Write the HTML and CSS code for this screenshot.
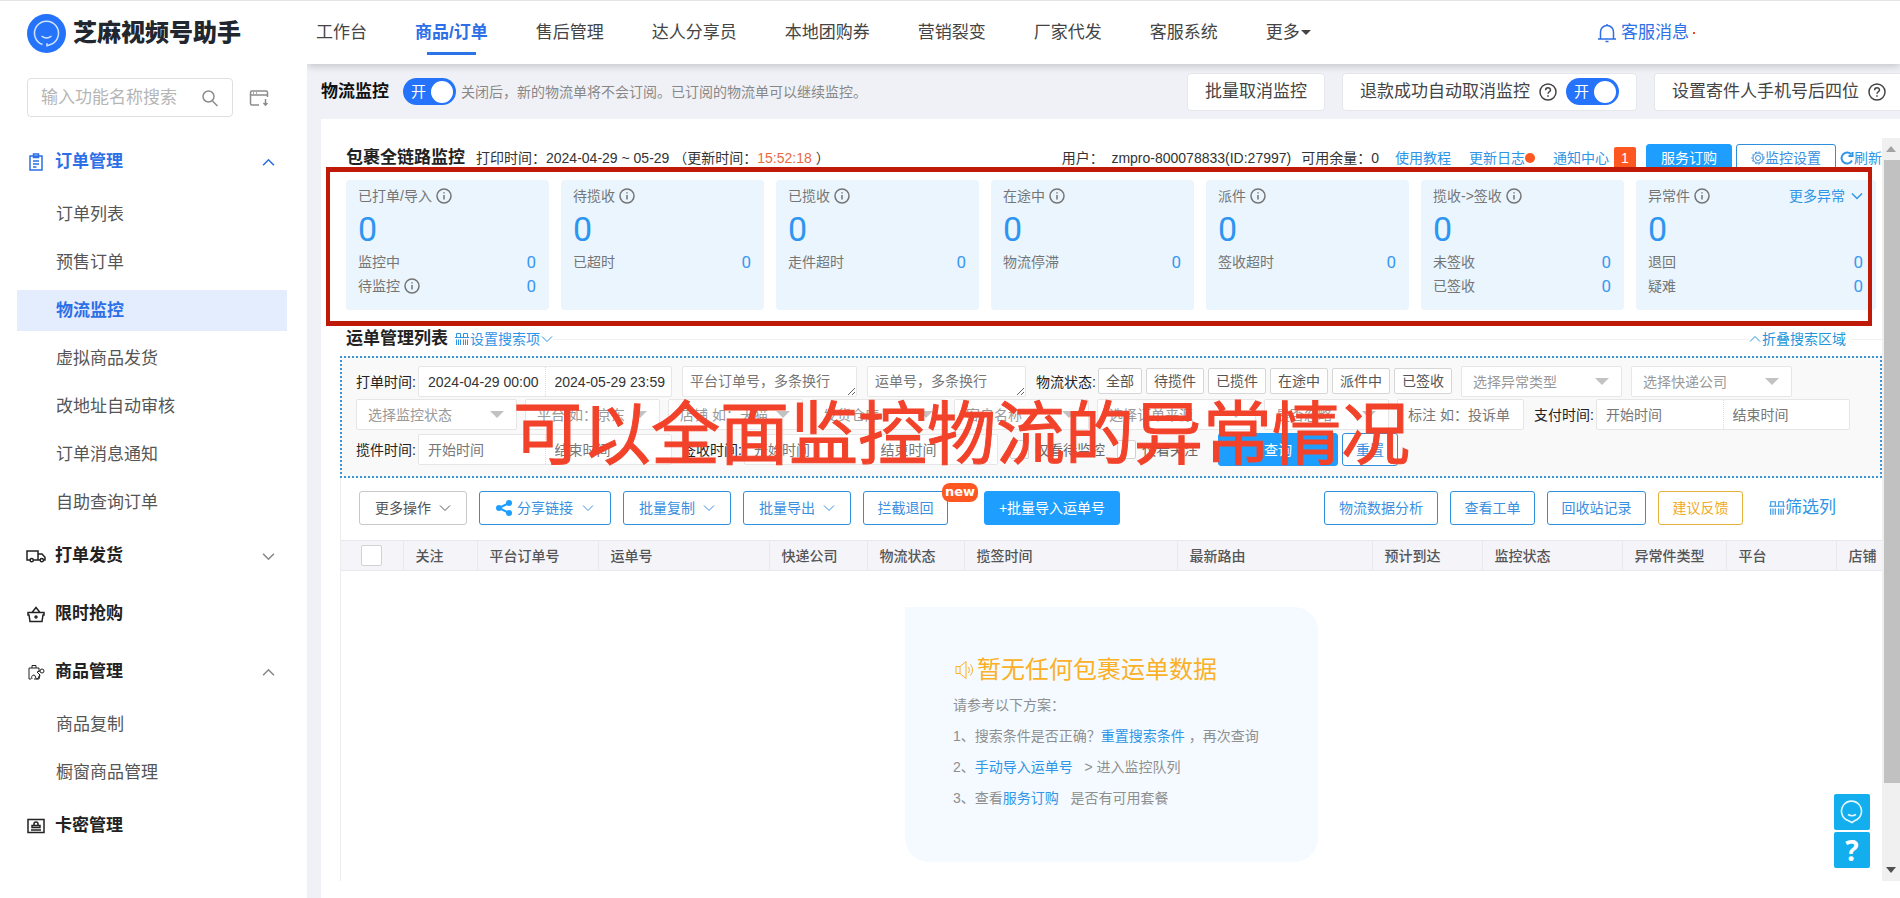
FILE: index.html
```html
<!DOCTYPE html>
<html lang="zh-CN">
<head>
<meta charset="utf-8">
<title>芝麻视频号助手</title>
<link rel="stylesheet" href="styles.css">
</head>
<body>
<svg class="defs" aria-hidden="true">
  <symbol id="info" viewBox="0 0 16 16"><circle cx="8" cy="8" r="7"/><path d="M8 7v4.500M8 4.200v1.400"/></symbol>
  <symbol id="help" viewBox="0 0 18 18"><circle cx="9" cy="9" r="8"/><path d="M6.600 7.200c0-3.200 4.900-3.100 4.900-.2 0 1.700-2.500 1.900-2.500 3.800M9 12.300v1.400"/></symbol>
  <symbol id="down" viewBox="0 0 12 12"><path d="M1 3.500l5 5 5-5"/></symbol>
  <symbol id="up" viewBox="0 0 12 12"><path d="M1 8.500l5-5 5 5"/></symbol>
  <symbol id="grid" viewBox="0 0 14 14"><path d="M1.500 6V1.500h4V6M8.500 6V1.500h4V6M0 5.500h14M1.500 7.500V13M3.500 7.500V13M5.500 7.500V13M8.500 7.500V13M10.500 7.500V13M12.500 7.500V13"/></symbol>
</svg>
<aside class="side">
  <div class="brand">
    <svg width="39" height="39" viewBox="0 0 39 39"><circle cx="19.500" cy="19.500" r="19.500" fill="#2673fb"/><path d="M15.500 30.500a12 12 0 1 1 8 0l-3.500 1.200v-2.500" fill="none" stroke="#cfe3ff" stroke-width="1.500"/><path d="M14.500 22q5 4 10 0" fill="none" stroke="#cfe3ff" stroke-width="1.500"/></svg>
    <h1>芝麻视频号助手</h1>
  </div>
  <div class="find">
    <label class="findbox"><input type="search" placeholder="输入功能名称搜索" aria-label="搜索功能">
      <svg class="ic gray" width="18" height="18" viewBox="0 0 18 18"><circle cx="7.500" cy="7.500" r="5.500"/><path d="M11.500 12l5 5"/></svg></label>
    <svg class="ic gray" width="20" height="18" viewBox="0 0 20 18"><path d="M10 16H3a1.500 1.500 0 0 1-1.500-1.500v-11A1.500 1.500 0 0 1 3 2h14a1.500 1.500 0 0 1 1.500 1.500V8M1.500 6h17M4 4h1M7 4h1M16.500 10v6M14.500 14l2 2.200 2-2.200"/></svg>
  </div>
  <nav class="menu">
    <button class="group on"><svg class="ic" width="18" height="18" viewBox="0 0 18 18"><path d="M3 3h12v14H3zM6.500 1h5v3.500h-5zM6 8h6M6 11h6M6 14h3.500"/></svg><span>订单管理</span><svg class="ic arrow"><use href="#up"/></svg></button>
    <a href="#">订单列表</a>
    <a href="#">预售订单</a>
    <a href="#" class="cur">物流监控</a>
    <a href="#">虚拟商品发货</a>
    <a href="#">改地址自动审核</a>
    <a href="#">订单消息通知</a>
    <a href="#">自助查询订单</a>
    <button class="group"><svg class="ic" width="20" height="18" viewBox="0 0 20 18"><path d="M4 13H1V4h11v9H7.500M12 7h4l3 3.200V13h-1.500M14 13h-2"/><circle cx="5.700" cy="13.200" r="1.600"/><circle cx="15.800" cy="13.200" r="1.600"/></svg><span>打单发货</span><svg class="ic arrow"><use href="#down"/></svg></button>
    <button class="group"><svg class="ic" width="18" height="18" viewBox="0 0 18 18"><path d="M1 7.500h16v2.500h-1l-1 6.500H3L2 10H1zM5 7.500L9 2.500l4 5"/><circle cx="9" cy="12" r="1"/></svg><span>限时抢购</span></button>
    <button class="group"><svg class="ic thin" width="18" height="18" viewBox="0 0 18 18"><path d="M4 16H2V5h10v3M5 5V2.500h4V5M5 16c-1-2 0-4 2-4s1 4 3 4 1.500-4 3-4M7 16h5l1-4-3-3 3-1"/><circle cx="15" cy="8" r="2"/></svg><span>商品管理</span><svg class="ic arrow"><use href="#up"/></svg></button>
    <a href="#">商品复制</a>
    <a href="#">橱窗商品管理</a>
    <button class="group"><svg class="ic" width="18" height="18" viewBox="0 0 18 18"><path d="M1 2.500h16v13H1zM4 13h10M5 10.500h8V8.500H5zM7 8.500V7a2 2 0 0 1 4 0v1.500"/></svg><span>卡密管理</span></button>
  </nav>
</aside>
<main class="main">
  <header class="top">
    <nav>
      <a href="#">工作台</a><a href="#" class="cur">商品/订单</a><a href="#">售后管理</a><a href="#">达人分享员</a><a href="#">本地团购券</a><a href="#">营销裂变</a><a href="#">厂家代发</a><a href="#">客服系统</a><a href="#" class="more">更多</a>
    </nav>
    <a href="#" class="bell"><svg class="ic" width="20" height="20" viewBox="0 0 20 20"><path d="M1 16h18M3.500 16V9a6.500 6.500 0 0 1 13 0v7M10 2.500V1M8.500 18.500h3"/></svg>客服消息<i></i></a>
  </header>
  <div class="bar">
    <h2>物流监控</h2>
    <label class="switch">开<input type="checkbox" checked></label>
    <span class="note">关闭后，新的物流单将不会订阅。已订阅的物流单可以继续监控。</span>
    <button class="pill first">批量取消监控</button>
    <div class="pill">退款成功自动取消监控<svg class="ic" width="18" height="18"><use href="#help"/></svg><label class="switch">开<input type="checkbox" checked></label></div>
    <button class="pill last">设置寄件人手机号后四位<svg class="ic" width="18" height="18"><use href="#help"/></svg></button>
  </div>
  <div class="panel">
    <div class="view">
      <div class="meta">
        <h2>包裹全链路监控</h2>
        <span class="period">打印时间：2024-04-29 ~ 05-29 （更新时间：<b>15:52:18</b> ）</span>
        <span class="user">用户：&nbsp; zmpro-800078833(ID:27997)</span>
        <span class="quota">可用余量：0</span>
        <a href="#">使用教程</a>
        <a href="#" class="log">更新日志<i class="dot"></i></a>
        <a href="#" class="notice">通知中心<i class="num">1</i></a>
        <button class="btn fill">服务订购</button>
        <button class="btn"><svg class="ic thin" width="14" height="14" viewBox="0 0 14 14"><circle cx="7" cy="7" r="2.500"/><circle cx="7" cy="7" r="6" stroke-dasharray="2 1.500"/><circle cx="7" cy="7" r="5"/></svg>监控设置</button>
        <a href="#" class="refresh"><svg class="ic" width="14" height="14" viewBox="0 0 14 14"><path d="M12 9.500A5.500 5.500 0 1 1 11 3.200M12.500 1v4h-4" stroke-width="2"/></svg>刷新</a>
      </div>
      <section class="stats">
        <article><h3>已打单/导入<svg class="ic"><use href="#info"/></svg></h3><strong>0</strong><p>监控中<em>0</em></p><p>待监控<svg class="ic"><use href="#info"/></svg><em>0</em></p></article>
        <article><h3>待揽收<svg class="ic"><use href="#info"/></svg></h3><strong>0</strong><p>已超时<em>0</em></p></article>
        <article><h3>已揽收<svg class="ic"><use href="#info"/></svg></h3><strong>0</strong><p>走件超时<em>0</em></p></article>
        <article><h3>在途中<svg class="ic"><use href="#info"/></svg></h3><strong>0</strong><p>物流停滞<em>0</em></p></article>
        <article><h3>派件<svg class="ic"><use href="#info"/></svg></h3><strong>0</strong><p>签收超时<em>0</em></p></article>
        <article><h3>揽收-&gt;签收<svg class="ic"><use href="#info"/></svg></h3><strong>0</strong><p>未签收<em>0</em></p><p>已签收<em>0</em></p></article>
        <article class="wide"><h3>异常件<svg class="ic"><use href="#info"/></svg><a href="#">更多异常<svg class="ic chev"><use href="#down"/></svg></a></h3><strong>0</strong><p>退回<em>0</em></p><p>疑难<em>0</em></p></article>
        <div class="frame"></div>
      </section>
      <div class="listhead">
        <h2>运单管理列表</h2>
        <a href="#"><svg class="ic thin" width="14" height="14"><use href="#grid"/></svg>设置搜索项<svg class="ic chev thin"><use href="#down"/></svg></a>
        <hr>
        <a href="#" class="fold"><svg class="ic chev thin"><use href="#up"/></svg>折叠搜索区域</a>
        <hr class="tail">
      </div>
      <form class="search">
        <div class="row">
          <span class="lab">打单时间:</span>
          <span class="range"><input aria-label="打单开始时间" value="2024-04-29 00:00"><input aria-label="打单结束时间" value="2024-05-29 23:59"></span>
          <textarea class="w175" placeholder="平台订单号，多条换行" aria-label="平台订单号"></textarea>
          <textarea class="w158" placeholder="运单号，多条换行" aria-label="运单号"></textarea>
          <span class="lab">物流状态:</span>
          <span class="chips"><button type="button">全部</button><button type="button">待揽件</button><button type="button">已揽件</button><button type="button">在途中</button><button type="button">派件中</button><button type="button">已签收</button></span>
          <span class="sel w161"><select aria-label="异常类型"><option>选择异常类型</option></select></span>
          <span class="sel w161"><select aria-label="快递公司"><option>选择快递公司</option></select></span>
        </div>
        <div class="row tight">
          <span class="sel w161"><select aria-label="监控状态"><option>选择监控状态</option></select></span>
          <span class="sel w135"><select aria-label="平台"><option>平台 如：京东</option></select></span>
          <span class="sel w135"><select aria-label="店铺"><option>店铺 如：天猫</option></select></span>
          <span class="sel w135"><select aria-label="发货仓库"><option>发货仓库</option></select></span>
          <span class="sel w135"><select aria-label="客户名称"><option>客户名称</option></select></span>
          <span class="sel w158"><select aria-label="订单来源"><option>选择订单来源</option></select></span>
          <span class="sel w125"><select aria-label="是否忽略"><option>是否忽略</option></select></span>
          <input class="w127" placeholder="标注 如：投诉单" aria-label="标注">
          <span class="lab">支付时间:</span>
          <span class="range"><input aria-label="支付开始时间" placeholder="开始时间"><input aria-label="支付结束时间" placeholder="结束时间"></span>
        </div>
        <div class="row third">
          <span class="lab">揽件时间:</span>
          <span class="range"><input aria-label="揽件开始时间" placeholder="开始时间"><input aria-label="揽件结束时间" placeholder="结束时间"></span>
          <span class="lab">签收时间:</span>
          <span class="range"><input aria-label="签收开始时间" placeholder="开始时间"><input aria-label="签收结束时间" placeholder="结束时间"></span>
          <label class="tick"><input type="checkbox">仅看待监控</label>
          <label class="tick"><input type="checkbox">仅看关注</label>
          <button type="button" class="btn fill query">查询</button>
          <button type="button" class="btn reset">重置</button>
        </div>
        <p class="caption">可以全面监控物流的异常情况</p>
      </form>
      <div class="table">
        <div class="tools">
          <button class="btn plain">更多操作<svg class="ic chev thin"><use href="#down"/></svg></button>
          <button class="btn share"><svg width="16" height="16" viewBox="0 0 16 16"><path d="M13 3L3 8l10 5" fill="none" stroke="#1e9fff" stroke-width="2"/><circle cx="13" cy="3" r="3" fill="#1e9fff"/><circle cx="3" cy="8" r="3" fill="#1e9fff"/><circle cx="13" cy="13" r="3" fill="#1e9fff"/></svg>分享链接<svg class="ic chev thin"><use href="#down"/></svg></button>
          <button class="btn drop">批量复制<svg class="ic chev thin"><use href="#down"/></svg></button>
          <button class="btn drop">批量导出<svg class="ic chev thin"><use href="#down"/></svg></button>
          <button class="btn w85">拦截退回<i class="new">new</i></button>
          <button class="btn fill import">+批量导入运单号</button>
          <button class="btn push">物流数据分析</button>
          <button class="btn w85">查看工单</button>
          <button class="btn w99">回收站记录</button>
          <button class="btn warn w85">建议反馈</button>
          <a href="#" class="cols"><svg class="ic thin" width="16" height="16"><use href="#grid"/></svg>筛选列</a>
        </div>
        <table>
          <colgroup><col class="c62"><col class="c74"><col class="c121"><col class="c171"><col class="c98"><col class="c97"><col class="c213"><col class="c195"><col class="c110"><col class="c140"><col class="c104"><col class="c110"><col></colgroup>
          <thead><tr><th><input type="checkbox" class="all" aria-label="全选"></th><th>关注</th><th>平台订单号</th><th>运单号</th><th>快递公司</th><th>物流状态</th><th>揽签时间</th><th>最新路由</th><th>预计到达</th><th>监控状态</th><th>异常件类型</th><th>平台</th><th>店铺</th></tr></thead>
        </table>
        <div class="empty">
          <h2><svg class="ic thin" width="20" height="20" viewBox="0 0 20 20"><path d="M1 6.500h4l6-5v17l-6-5H1zM5 6.500v7M13.500 7q2 3 0 6M15.500 4.500q4 5.500 0 11"/></svg>暂无任何包裹运单数据</h2>
          <p>请参考以下方案：</p>
          <p>1、搜索条件是否正确？<a href="#">重置搜索条件</a>&nbsp;，再次查询</p>
          <p>2、<a href="#">手动导入运单号</a>&nbsp;&nbsp; &gt; 进入监控队列</p>
          <p>3、查看<a href="#">服务订购</a>&nbsp;&nbsp; 是否有可用套餐</p>
        </div>
      </div>
    </div>
    <div class="scroll"><i class="tri up"></i><i class="thumb"></i><i class="tri"></i></div>
  </div>
</main>
<div class="float">
  <button aria-label="客服"><svg width="24" height="24" viewBox="0 0 24 24" fill="none" stroke="#e6f8ff" stroke-width="1.600"><path d="M8 20.500a10 10 0 1 1 7 0l-3 2z"/><path d="M8 14.500q4 2.500 8 0"/></svg></button>
  <button>?</button>
</div>
</body>
</html>
```
FILE: styles.css
```css
* { box-sizing: border-box; }
body {
  margin: 0; display: flex; min-height: 100vh; overflow: hidden; background: #fff; color: #333;
  font-family: "Liberation Sans", "Noto Sans CJK SC", sans-serif; font-size: 14px; line-height: 20px;
  border-top: 1px solid #e4e4e4;
}
h1, h2, h3, p { margin: 0; font-weight: normal; }
i, em { font-style: normal; }
a { color: #2f95e6; text-decoration: none; }
button, input, select, textarea { font: inherit; color: inherit; }
button { cursor: pointer; white-space: nowrap; }
.defs { position: absolute; width: 0; height: 0; }
.ic { fill: none; stroke: currentColor; stroke-width: 1.5; flex: none; }
.thin { stroke-width: 1; }
.gray { color: #8c8c8c; }
.chev { width: 12px; height: 12px; }

/* sidebar */
.side { width: 307px; flex: none; font-size: 17px; }
.brand { display: flex; align-items: center; gap: 7px; height: 64px; padding: 0 0 0 27px; }
.brand h1 { font-size: 24px; font-weight: 900; line-height: 36px; color: #22262e; }
.find { display: flex; align-items: center; gap: 16px; padding: 13px 27px; }
.findbox { display: flex; align-items: center; width: 206px; height: 39px; padding: 0 13px; border: 1px solid #dedfe2; border-radius: 4px; }
.findbox input { flex: 1; min-width: 0; border: 0; padding: 0; outline: 0; }
.findbox input::placeholder { color: #b5b5b5; }
.menu { display: flex; flex-direction: column; padding: 3px 20px 0 17px; }
.menu .group { display: flex; align-items: center; height: 58px; padding: 0 12px 0 9px; border: 0; background: none; font-weight: bold; color: #222; }
.menu .group > :first-child { width: 20px; margin-right: 9px; }
.menu .group .arrow { width: 13px; height: 13px; margin-left: auto; color: #888; stroke-width: 1.5; }
.menu .group.on, .menu .group.on .arrow { color: #2d6fe6; }
.menu a { margin: 3px 0 4px; padding-left: 39px; line-height: 41px; color: #555; }
.menu a.cur { background: #e4edfe; color: #2d6fe6; font-weight: bold; }

/* top navigation */
.main { flex: 1; min-width: 0; display: flex; flex-direction: column; overflow: hidden; background: #f0f1f6; }
.top { display: flex; align-items: center; height: 63px; background: #fff; font-size: 17px; box-shadow: 0 2px 8px #0003; z-index: 1; }
.top nav { display: flex; gap: 48px; padding-left: 9px; }
.top nav a { position: relative; line-height: 60px; color: #444; }
.top nav a.cur { color: #2d6fe6; font-weight: bold; }
.top nav a.cur::after { content: ""; position: absolute; left: 12px; right: 12px; bottom: 8px; height: 3px; background: #2d73e8; }
.top .more { display: flex; align-items: center; gap: 1px; }
.top .more::after { content: ""; border: 5px solid transparent; border-top-color: #444; border-bottom: 0; }
.bell { display: flex; align-items: center; gap: 4px; margin: 0 205px 0 auto; color: #2d6fe6; }
.bell i { width: 2px; height: 2px; background: #f2422a; }

/* page bar */
.bar { display: flex; align-items: center; height: 55px; padding-left: 14px; white-space: nowrap; overflow: hidden; }
.bar h2 { font-size: 17px; font-weight: bold; color: #111; }
.switch { display: flex; align-items: center; justify-content: space-between; width: 53px; height: 27px; padding: 0 3px 0 8px; border-radius: 14px; background: #2673fb; color: #fff; font-size: 15px; }
.switch input { appearance: none; width: 22px; height: 22px; margin: 0; border-radius: 50%; background: #fff; }
.bar h2 + .switch { margin: 0 5px 0 14px; }
.note { color: #888; }
.pill { display: flex; align-items: center; gap: 9px; height: 38px; margin-left: 17px; padding: 0 17px; background: #fff; border: 1px solid #e6e7eb; border-radius: 4px; font-size: 17px; color: #444; }
.pill.first { margin-left: auto; }
.pill.last { padding-right: 14px; border-right: 0; border-radius: 4px 0 0 4px; }

/* content area */
.panel { flex: 1; display: flex; margin-left: 14px; padding: 19px 0 17px; background: #fff; }
.view { flex: 1; min-width: 0; display: flex; flex-direction: column; padding: 6px 0 0 19px; }
.scroll { width: 18px; flex: none; display: flex; flex-direction: column; align-items: center; justify-content: space-between; padding: 8px 0; background: #f0f0f0; }
.thumb { flex: 1; width: 16px; margin: 8px 0 84px 2px; background: #c1c1c1; }
.tri { border: 5px solid transparent; border-top: 6px solid #505050; border-bottom: 0; }
.tri.up { border-bottom: 6px solid #a3a3a3; border-top: 0; }

.meta { display: flex; align-items: center; height: 28px; padding-left: 6px; white-space: nowrap; }
.meta h2, .listhead h2 { font-size: 17px; font-weight: bold; color: #222; }
.period { margin-left: 11px; }
.period b { font-weight: normal; color: #e86a3f; }
.user { margin-left: auto; }
.quota { margin: 0 16px 0 10px; }
.log, .notice { display: flex; align-items: center; margin-left: 18px; }
.dot { width: 10px; height: 10px; border-radius: 50%; background: #ff5722; }
.num { margin: 0 10px 0 5px; width: 22px; line-height: 22px; border-radius: 2px; background: #ff5722; color: #fff; text-align: center; }
.meta .btn { height: 28px; gap: 0; padding: 0 14px; }
.meta .btn + .btn { margin: 0 4px; }
.refresh { display: flex; align-items: center; }

.btn { position: relative; display: flex; align-items: center; justify-content: center; gap: 7px; height: 34px; padding: 0 12px; border: 1px solid #2f8fdc; border-radius: 3px; background: #fff; color: #3a8fe0; }
.btn.fill { border-color: #1e9fff; background: #1e9fff; color: #fff; }
.btn.plain { border-color: #c9c9c9; color: #555; }
.btn.warn { border-color: #e5b23c; color: #efa91d; }

/* statistics */
.stats { position: relative; display: grid; grid-template-columns: repeat(6, 203fr) 240fr; gap: 12px; margin-top: 8px; padding: 0 6px; color: #757575; }
.stats article { height: 130px; padding: 4px 13px 0 12px; border-radius: 4px; background: #eaf5fe; }
.stats h3 { display: flex; align-items: center; gap: 4px; height: 24px; font-size: 14px; }
.stats h3 a { display: flex; align-items: center; gap: 6px; margin-left: auto; }
.stats .ic:not(.chev) { width: 16px; height: 16px; }
.stats strong { display: block; height: 42px; font: 400 34px/42px Roboto, sans-serif; color: #2e96f0; }
.stats p { display: flex; align-items: center; gap: 4px; height: 24px; }
.stats em { margin-left: auto; font: 400 17px/24px Roboto, sans-serif; color: #3a98f0; }
.frame { position: absolute; inset: -13px 10px -16px -14px; border: 5px solid #bf1a07; border-width: 5px 4px; pointer-events: none; }

/* list title */
.listhead { display: flex; align-items: center; height: 24px; margin: 17px 0 5px; padding-left: 6px; }
.listhead a { display: flex; align-items: center; gap: 1px; margin-left: 7px; }
.listhead a.fold { margin: 0 5px 0 0; color: #2196d8; }
.listhead hr { flex: 1; margin: 0; border: 0; border-top: 1px solid #f0f0f0; }
.listhead .tail { flex: none; width: 31px; }

/* search form */
.search { position: relative; display: flex; flex-direction: column; gap: 2px; padding: 8px 14px 9px; border: 2px dotted #3a94d8; background: #f9f9f9; }
.row { display: flex; align-items: center; gap: 10px; height: 31px; white-space: nowrap; }
.row.tight { gap: 8px; }
.row.third { height: 35px; }
.lab { width: 62px; flex: none; color: #222; }
.lab + .range, .lab + .chips { margin-left: -10px; }
.tight .lab { margin-left: 2px; }
.tight .lab + .range { margin-left: -8px; }
.range { display: flex; flex: none; width: 254px; height: 31px; border: 1px solid #e6e6e6; border-radius: 2px; background: #fff; }
.range input { flex: 1; min-width: 0; border: 0; padding: 0 0 0 9px; background: none; }
.range input + input { border-left: 1px dotted #ddd; }
.row > input, textarea, select { height: 31px; border: 1px solid #e6e6e6; border-radius: 2px; background: #fff; }
.row > input { padding: 0 10px; }
.search ::placeholder { color: #777; }
textarea { flex: none; padding: 4px 7px; overflow: hidden; }
.sel { position: relative; flex: none; }
.sel select { width: 100%; padding: 0 11px; appearance: none; color: #999; }
.sel::after { content: ""; position: absolute; right: 13px; top: 12px; border: 7px solid transparent; border-top-color: #c2c2c2; border-bottom: 0; pointer-events: none; }
.w161 { width: 161px; }
.w175 { width: 175px; }
.w158 { width: 159px; }
.w135 { width: 135px; }
.w125 { width: 125px; }
.w127 { width: 127px; }
.chips { display: flex; gap: 4px; margin-bottom: 2px; }
.chips button { height: 26px; padding: 0 7px; border: 1px solid #d6d6d6; border-radius: 2px; background: #fff; color: #555; }
.chips button:not(:first-child) { width: 58px; }
.chips + .sel, .chips + .sel + .sel { margin-left: -1px; }
.tick { display: flex; align-items: center; gap: 6px; color: #666; }
.tick input, .all { appearance: none; width: 19px; height: 19px; margin: 0; border: 1px solid #d2d2d2; border-radius: 2px; background: #fff; }
.range + .tick { margin: 0 2px; }
.query { width: 120px; height: 33px; margin-left: 10px; }
.reset { width: 56px; height: 33px; margin-left: -6px; }
.caption { position: absolute; left: 171px; top: 38px; font-size: 69px; line-height: 80px; color: #f2422a; -webkit-text-stroke: 1px #f2422a; white-space: nowrap; pointer-events: none; }

/* table */
.table { flex: 1; border-left: 1px solid #ececec; }
.tools { display: flex; align-items: center; gap: 12px; padding: 13px 46px 15px 18px; white-space: nowrap; }
.share { width: 132px; gap: 5px; }
.plain, .drop { width: 108px; gap: 8px; }
.share .chev { margin-left: 4px; }
.new { position: absolute; right: -31px; top: -9px; width: 36px; height: 19px; border-radius: 8px; background: #ff5722; color: #fff; font: bold 13px/17px "DejaVu Sans", sans-serif; text-align: center; }
.import { width: 136px; margin-left: 24px; }
.w85 { width: 85px; }
.w99 { width: 99px; }
.push { width: 114px; margin-left: auto; }
.cols { display: flex; align-items: center; font-size: 17px; margin-left: 14px; }
table { width: 100%; table-layout: fixed; border-collapse: collapse; }
th { height: 30px; padding: 0 0 0 12px; text-align: left; font-weight: 500; color: #555; background: #f4f4f9; border: 1px solid #e8e8ee; border-width: 1px 1px 1px 0; white-space: nowrap; }
th:last-child { border-right: 0; }
th:first-child { padding-left: 20px; }
.all { display: block; width: 21px; height: 21px; }
.c62 { width: 62px; }
.c74 { width: 74px; }
.c121 { width: 121px; }
.c171 { width: 171px; }
.c98 { width: 98px; }
.c97 { width: 97px; }
.c213 { width: 213px; }
.c195 { width: 195px; }
.c110 { width: 110px; }
.c140 { width: 140px; }
.c104 { width: 104px; }
.empty { width: 413px; margin: 36px auto 18px; padding: 45px 0 48px 48px; border-radius: 0 24px 24px 24px; background: #f4faff; color: #8f8f8f; line-height: 31px; }
.empty h2 { display: flex; align-items: center; gap: 2px; margin-bottom: 2px; padding-left: 2px; font-size: 24px; line-height: 36px; color: #fbb026; }

.float { position: absolute; right: 30px; bottom: 30px; display: grid; gap: 2px; }
.float button { display: grid; place-items: center; width: 36px; height: 36px; padding: 0; border: 0; border-radius: 2px; background: #12aeee; color: #fff; font: bold 28px/36px "Noto Sans", sans-serif; }
```
